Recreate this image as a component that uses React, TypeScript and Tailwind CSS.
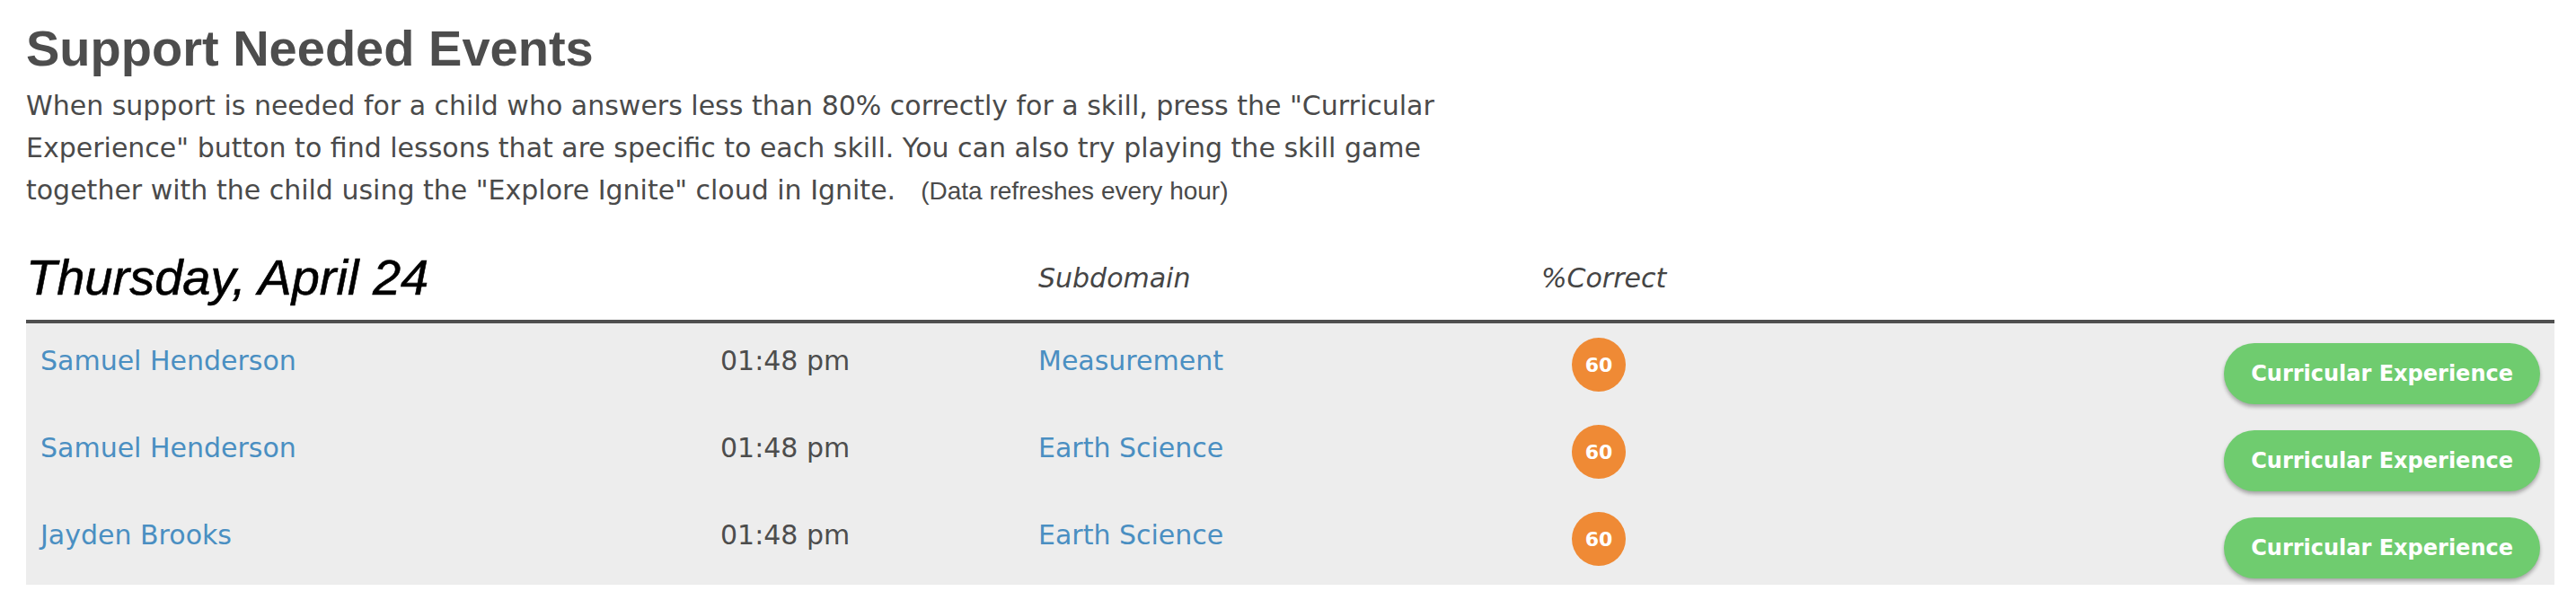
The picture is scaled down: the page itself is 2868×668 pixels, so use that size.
const events = [
  { name: 'Samuel Henderson', time: '01:48 pm', subdomain: 'Measurement', score: 60 },
  { name: 'Samuel Henderson', time: '01:48 pm', subdomain: 'Earth Science', score: 60 },
  { name: 'Jayden Brooks', time: '01:48 pm', subdomain: 'Earth Science', score: 60 },
];

function EventRow({ name, time, subdomain, score }: { name: string; time: string; subdomain: string; score: number }) {
  return (
    <div className="flex items-start h-[97px] px-[16px]">
      <a href="#" className="w-[757px] mt-[22px] leading-[40px] text-[30px] text-[#4a8fc2]">{name}</a>
      <div className="w-[354px] mt-[22px] leading-[40px] text-[30px] text-[#4d4d4d]">{time}</div>
      <a href="#" className="w-[594px] mt-[22px] leading-[40px] text-[30px] text-[#4a8fc2]">{subdomain}</a>
      <div className="mt-[16px] w-[60px] h-[60px] rounded-full bg-[#ef8a35] flex items-center justify-center text-white font-bold text-[22px]">
        {score}
      </div>
      <div className="flex-1 flex justify-end">
        <button className="mt-[22px] h-[68px] px-[30px] rounded-full bg-[#6fcc6f] text-white font-bold text-[24px] shadow-[0_3px_4px_rgba(0,0,0,0.3)]">
          Curricular Experience
        </button>
      </div>
    </div>
  );
}

export default function App() {
  return (
    <div className="min-h-screen bg-white pl-[29px] pr-[24px] pt-[22px] font-['DejaVu_Sans',sans-serif]">
      <h1 className="text-[56px] leading-[64px] font-bold text-[#4d4d4d] font-['Liberation_Sans',Arial,sans-serif]">
        Support Needed Events
      </h1>
      <p className="mt-[8px] max-w-[1640px] text-[30px] leading-[47px] text-[#4a4a4a]">
        When support is needed for a child who answers less than 80% correctly for a skill, press the "Curricular
        Experience" button to find lessons that are specific to each skill. You can also try playing the skill game
        together with the child using the "Explore Ignite" cloud in Ignite.
        <span className="ml-[28px] text-[28px] leading-none font-['Liberation_Sans',Arial,sans-serif]">(Data refreshes every hour)</span>
      </p>

      <div className="mt-[44px]">
        <div className="flex items-center h-[60px] box-content pb-[17px] border-b-4 border-[#4f4f4f]">
          <h2 className="w-[1127px] text-[56px] leading-[60px] italic text-black [-webkit-text-stroke:0.6px_black] font-['Liberation_Sans',Arial,sans-serif]">
            Thursday, April 24
          </h2>
          <div className="w-[560px] text-[30px] italic text-[#454545]">Subdomain</div>
          <div className="text-[30px] italic text-[#454545]">%Correct</div>
        </div>
        <div className="bg-[#ededed]">
          {events.map((e, i) => (
            <EventRow key={i} {...e} />
          ))}
        </div>
      </div>
    </div>
  );
}
